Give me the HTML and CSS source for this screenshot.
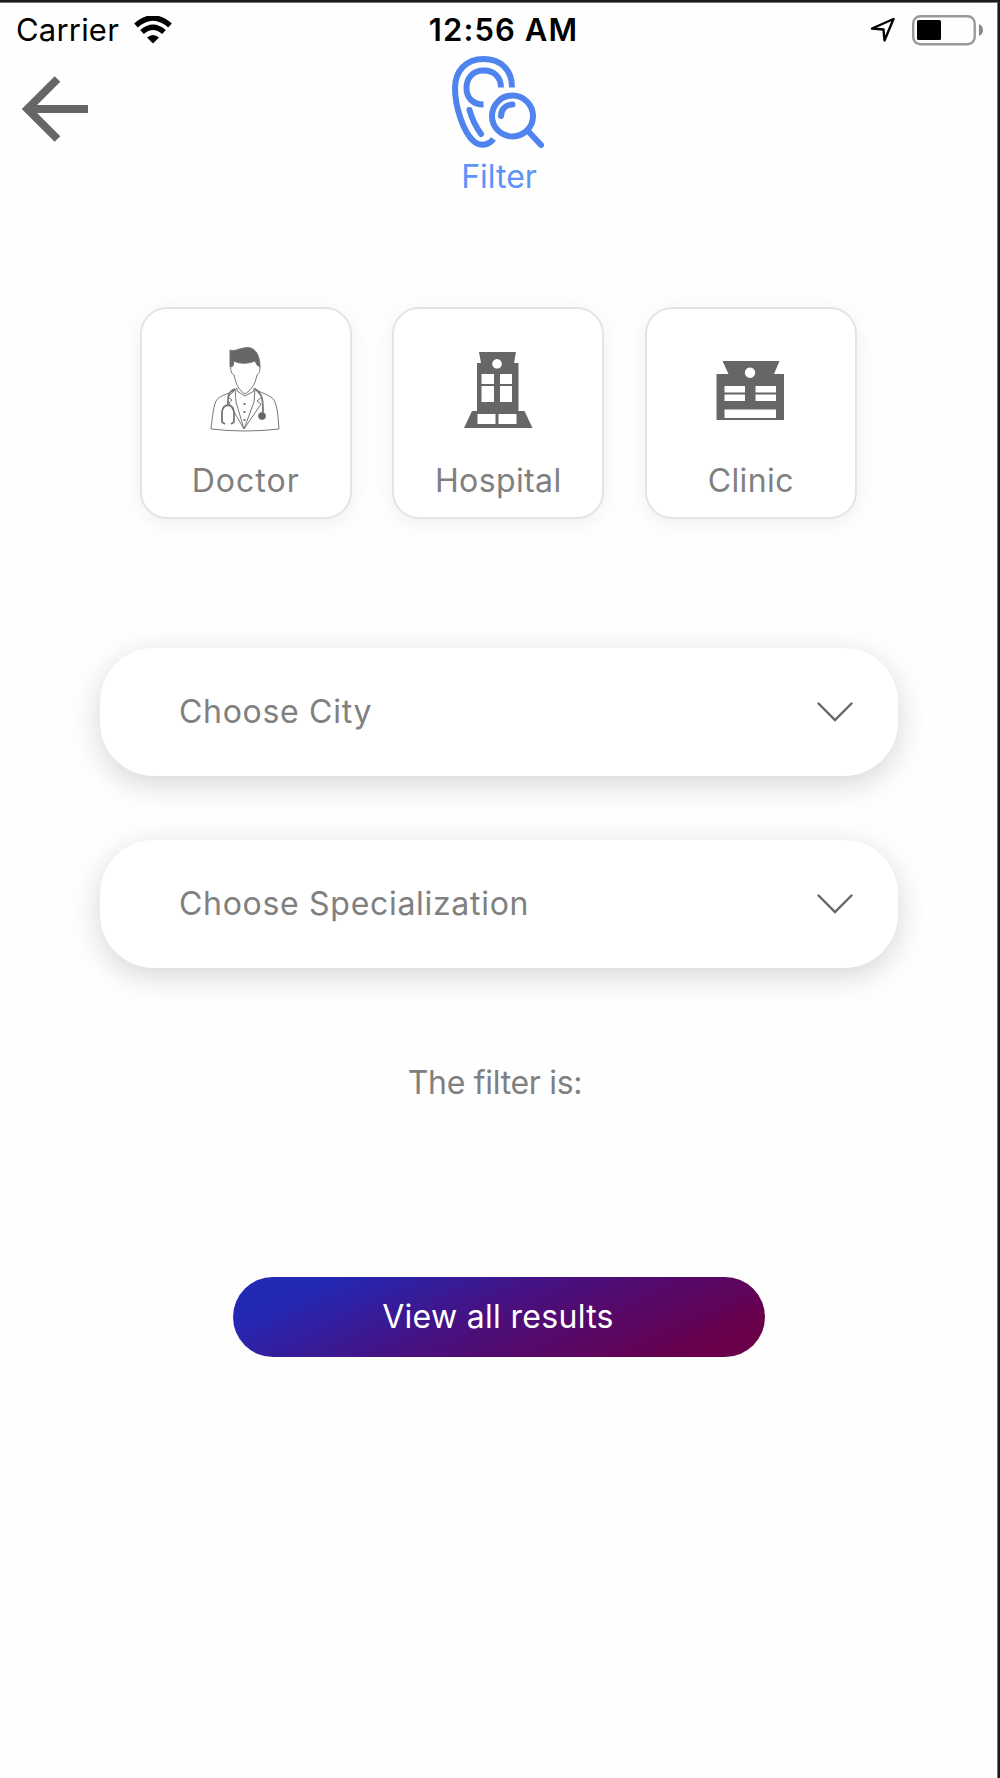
FILE: index.html
```
<!DOCTYPE html>
<html lang="en">
<head>
    <meta charset="UTF-8">
    <meta name="viewport" content="width=device-width, initial-scale=1.0">
    <title>Filter</title>
    <link rel="stylesheet" href="styles.css">
</head>
<body>

    <div class="screen">
        <div class="status-bar">
            <div class="status-left">
                <span class="carrier">Carrier</span>
                <svg class="wifi" width="38" height="28" viewBox="0 0 38 28">
                    <path d="M2 9.500Q19-5.500 36 9.500" fill="none" stroke="#000" stroke-width="5.500"/>
                    <path d="M8 16Q19 6.500 30 16" fill="none" stroke="#000" stroke-width="5.500"/>
                    <path d="M13 21.500Q19 16.500 25 21.500L19 27.500Z"/>
                </svg>
            </div>
            <span class="time">12:56 AM</span>
            <div class="status-right">
                <svg width="26" height="26" viewBox="0 0 26 26">
                    <path d="M2 11.500L23.500 2L14.500 23.500L13.500 12.500Z" fill="none" stroke="#000" stroke-width="2.400" stroke-linejoin="round"/>
                </svg>
                <svg width="72" height="32" viewBox="0 0 72 32">
                    <rect x="2.200" y="2.200" width="61.500" height="28" rx="7" fill="none" stroke="#999" stroke-width="2.400"/>
                    <rect x="6" y="6" width="24" height="20" rx="1.500"/>
                    <path d="M68 10q4 2 4 6t-4 6z" fill="#888"/>
                </svg>
            </div>
        </div>

        <div class="header">
            <a href="#" class="back">
                <svg width="66" height="66" viewBox="0 0 66 66" fill="none" stroke="#666" stroke-width="8">
                    <path d="M35.500 3L5.500 33L35.500 63M8 33H66"/>
                </svg>
            </a>
            <div class="title">
                <svg width="92" height="92" viewBox="0 0 92 92" fill="none" stroke="#4f84ee" stroke-width="6">
                    <path d="M60 31.500C60 13 48 3 31.500 3C14 3 3 15 3 32C3 50 11 76 22 85.500C29 91 37 89 41.500 83"/>
                    <path d="M49 31.500C49 21 42 14.500 31.500 14.500C21 14.500 14.500 22 14.500 32C14.500 42 21 48.500 31.500 48.500"/>
                    <path d="M17.500 54C20 63 24 71 29 78" stroke-linecap="round"/>
                    <circle cx="60.500" cy="60" r="20.500"/>
                    <path d="M49 60C49 53 54 48.500 60.500 48.500M76 75L89 89" stroke-linecap="round"/>
                </svg>
                <h2>Filter</h2>
            </div>
        </div>

        <div class="types">
            <div class="type">
                <svg width="70" height="86" viewBox="0 0 70 86" fill="none" stroke="#777" stroke-width="1">
                    <path d="M20 4C25 6 28 2 38 1.500C46 2 50 10 50 21L47 19L45 15C38 18 29 18 24 15L23 20L20 21V9Z" fill="#666"/>
                    <path d="M21 20C20 25 22 28 24 29C26 39 29 44 35 48C41 44 45 39 47 29C50 27 50 24 50 20"/>
                    <path d="M27 42V45L35 50L44 45V42M27 42C22 48 10 48 6 55C3 62 2 75 1 83Q35 87 69 83C68 73 68 61 64 54C61 49 50 47 44 42"/>
                    <path d="M25 43L26 56L34 83L44 56L45 43M25 44L18 51L22 54L19 57L34 83L51 58L47 55L52 51L45 43"/>
                    <path d="M25 43C17 46 18 52 18 59M15 78L12 76V66C13 57 23 57 24 66V76L21 78M45 43C53 47 53 56 53 67" stroke-width="1.800"/>
                    <circle cx="52" cy="70" r="3.500" fill="#666"/>
                    <path d="M34.500 57v2M34.500 65v2M34.500 73v2" stroke-width="2"/>
                </svg>
                <p class="doctor">Doctor</p>
            </div>
            <div class="type">
                <svg width="70" height="86" viewBox="0 0 70 86" fill="#666">
                    <path fill-rule="evenodd" d="M16 6H53L51 17H55.500V65H61.500L69.500 82H1L9 65H14V17H18ZM34 13a4.800 4.800 0 1 0 .1 0ZM18.500 28V38H31V28ZM18.500 40V56H31V40ZM37 28V38H49V28ZM37 40V56H49V40ZM14.500 68V78H32.500V68ZM35.500 68V78H53.500V68Z"/>
                </svg>
                <p>Hospital</p>
            </div>
            <div class="type">
                <svg width="70" height="86" viewBox="0 0 70 86" fill="#666">
                    <path fill-rule="evenodd" d="M7.500 15H64.500L59 28H69V74H1.500V28H13.500ZM35 21.500a5.200 5.200 0 1 0 .1 0ZM9.500 40V46.500H30V40ZM9.500 48.500V55H30V48.500ZM40.500 40V46.500H61V40ZM40.500 48.500V55H61V48.500ZM9.500 63.500V72H61V63.500Z"/>
                </svg>
                <p>Clinic</p>
            </div>
        </div>

        <div class="selects">
            <div class="select">
                <span>Choose City</span>
                <svg width="36" height="20" viewBox="0 0 36 20" fill="none" stroke="#666" stroke-width="2.400" stroke-linecap="round">
                    <path d="M1.500 1.500L18 18L34.500 1.500"/>
                </svg>
            </div>
            <div class="select">
                <span>Choose Specialization</span>
                <svg width="36" height="20" viewBox="0 0 36 20" fill="none" stroke="#666" stroke-width="2.400" stroke-linecap="round">
                    <path d="M1.500 1.500L18 18L34.500 1.500"/>
                </svg>
            </div>
        </div>

        <p class="summary">The filter is:</p>

        <button class="results">View all results</button>
    </div>

</body>
</html>
```
FILE: styles.css
```
* {
    box-sizing: border-box;
}
body {
    margin: 0;
    font-family: Inter, "Liberation Sans", sans-serif;
    font-size: 32px;
    font-weight: 400;
    line-height: 40px;
    letter-spacing: 0.4px;
    color: #808080;
    background: #fefefe;
}
h2, p {
    margin: 0;
    font-size: inherit;
    font-weight: inherit;
}
svg {
    display: block;
}
.screen {
    height: 1778px;
    border-top: 2px solid #1a1a1a;
    border-right: 2px solid #1a1a1a;
    box-shadow: inset -1px 1px 0 #777;
}
.status-bar {
    display: grid;
    grid-template-columns: 1fr auto 1fr;
    height: 54px;
    padding: 8px 15px 0 16px;
    color: #000;
}
.status-left, .status-right {
    display: flex;
    align-items: center;
    height: 40px;
}
.status-left {
    gap: 15px;
}
.status-right {
    justify-content: flex-end;
    gap: 15px;
}
.carrier {
    font-size: 31px;
    letter-spacing: 0.2px;
}
.time {
    margin-left: 8px;
    font-size: 31px;
    font-weight: 600;
    letter-spacing: 1.1px;
}
.header {
    display: grid;
    grid-template-columns: 1fr auto 1fr;
    height: 251px;
    padding: 0 24px 0 22px;
}
.back {
    width: 66px;
    padding-top: 20px;
}
.title h2 {
    margin-top: 9px;
    padding-left: 2px;
    text-align: center;
    letter-spacing: 0;
    color: #5b93f7;
}
.types {
    display: flex;
    justify-content: center;
    gap: 40.5px;
    padding-right: 1.5px;
}
.type {
    display: flex;
    flex-direction: column;
    align-items: center;
    width: 212px;
    height: 212px;
    padding-top: 37px;
    border: 2px solid #e4e4e4;
    border-radius: 27px;
    background: #fff;
    box-shadow: 0 4px 20px rgba(0, 0, 0, 0.06);
}
.type svg {
    margin-right: 1px;
}
.type p {
    margin-top: 29px;
}
.type .doctor {
    letter-spacing: 1px;
}
.selects {
    display: flex;
    flex-direction: column;
    gap: 64px;
    margin: 129px 100px 0;
}
.select {
    display: flex;
    align-items: center;
    justify-content: space-between;
    height: 128px;
    padding: 0 45px 0 79px;
    border-radius: 54px;
    background: #fff;
    box-shadow: 0 8px 30px rgba(0, 0, 0, 0.16);
    letter-spacing: 0.7px;
}
.summary {
    margin-top: 95px;
    padding-right: 8px;
    text-align: center;
    letter-spacing: -0.3px;
}
.results {
    display: block;
    width: 532px;
    height: 80px;
    margin: 174px auto 0;
    padding: 0 8px 0 6px;
    border: none;
    border-radius: 40px;
    background: linear-gradient(155deg, #2328b5 14%, #4a0f7c 50%, #68004b 88%);
    color: #fff;
    font: inherit;
    letter-spacing: 0.3px;
    cursor: pointer;
}
```
